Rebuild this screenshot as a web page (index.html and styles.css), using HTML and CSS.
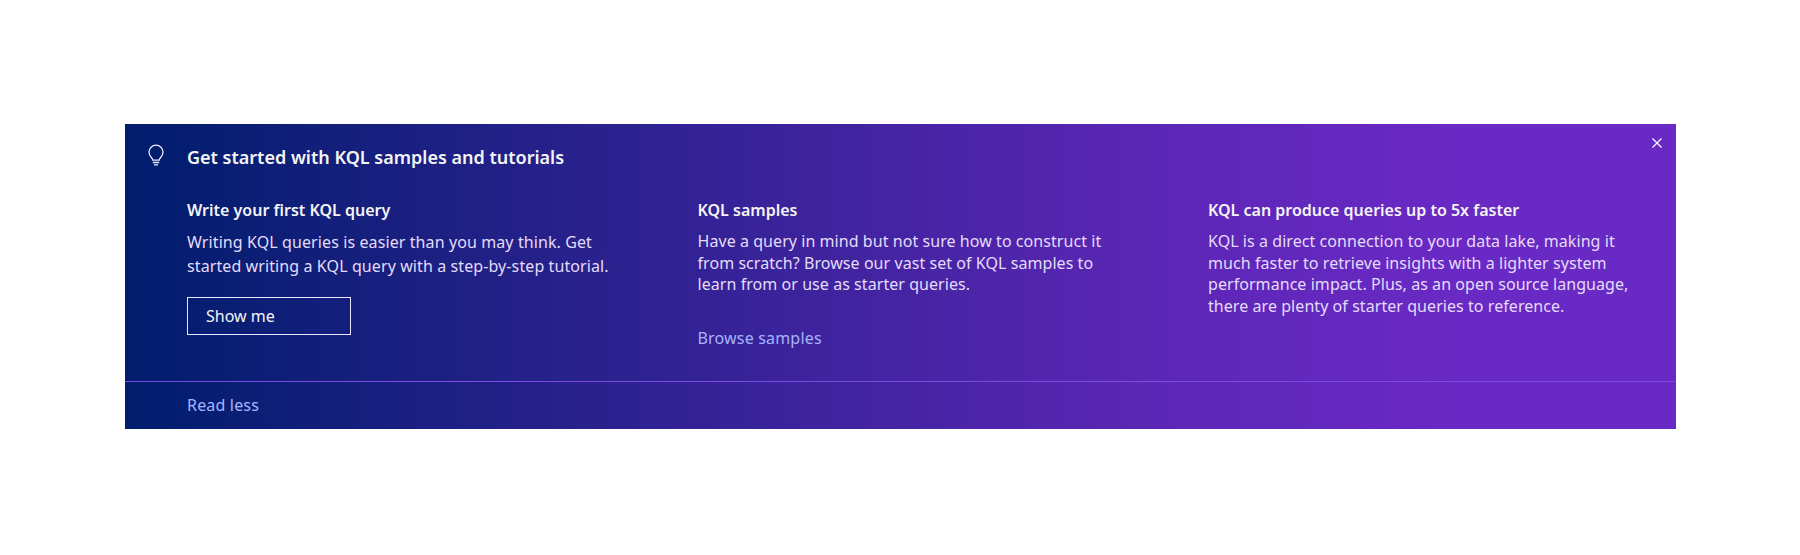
FILE: index.html
```html
<!DOCTYPE html>
<html lang="en">
<head>
<meta charset="utf-8">
<title>KQL samples and tutorials</title>
<link rel="stylesheet" href="styles.css">
</head>
<body>
<section class="banner">
  <button class="close" aria-label="Close">
    <svg width="16" height="16" viewBox="0 0 16 16"><path d="M3.500 3.500l9 9M12.500 3.500l-9 9" fill="none" stroke="currentColor" stroke-width="1.200"/></svg>
  </button>
  <div class="main">
    <header class="head">
      <svg class="bulb" width="20" height="24" viewBox="0 0 20 24"><path d="M6.800 16.200c0-2.200-3.800-3.800-3.800-8a7 7 0 0 1 14 0c0 4.200-3.800 5.800-3.800 8z" fill="none" stroke="currentColor" stroke-width="1.300"/><path d="M6.800 18.500h6.400M8 20.800h4" fill="none" stroke="currentColor" stroke-width="1.300"/></svg>
      <h2 class="title">Get started with KQL samples and tutorials</h2>
    </header>
    <div class="cols">
      <article class="col">
        <h3 class="col-title">Write your first KQL query</h3>
        <p class="text text-wide">Writing KQL queries is easier than you may think. Get<br>started writing a KQL query with a step-by-step tutorial.</p>
        <a class="btn" href="#">Show me</a>
      </article>
      <article class="col">
        <h3 class="col-title">KQL samples</h3>
        <p class="text">Have a query in mind but not sure how to construct it<br>from scratch? Browse our vast set of KQL samples to<br>learn from or use as starter queries.</p>
        <a class="link link-gap" href="#">Browse samples</a>
      </article>
      <article class="col">
        <h3 class="col-title">KQL can produce queries up to 5x faster</h3>
        <p class="text">KQL is a direct connection to your data lake, making it<br>much faster to retrieve insights with a lighter system<br>performance impact. Plus, as an open source language,<br>there are plenty of starter queries to reference.</p>
      </article>
    </div>
  </div>
  <footer class="foot"><a class="link" href="#">Read less</a></footer>
</section>
</body>
</html>
```
FILE: styles.css
```css
* { box-sizing: border-box; }
html, body { margin: 0; padding: 0; background: #fff; }
body { padding: 124px 124px 0 125px; font-family: "Noto Sans", "Open Sans", sans-serif; }
.banner {
  position: relative;
  width: 1551px;
  height: 305px;
  color: #fff;
  background: linear-gradient(90deg, #001d6c 0%, #5a26b4 65%, #6929c4 85%);
  display: flex;
  flex-direction: column;
}
.main { flex: 1; padding: 17px 0 0 0; }
.head { display: flex; align-items: center; height: 32px; }
.bulb { flex: none; width: 20px; margin-left: 21px; margin-right: 21px; margin-top: -2px; color: #e8e8ff; }
.title { margin: 0; font-size: 18px; font-weight: 600; line-height: 32px; color: #f4f4f4; }
.cols { display: flex; padding-left: 62px; margin-top: 26px; }
.col { flex: none; width: 510.500px; }
.col-title { margin: 0; font-size: 16px; font-weight: 600; line-height: 22px; color: #f4f4f4; }
.text { margin: 10px 0 0; font-size: 16px; letter-spacing: 0.060px; line-height: 21.700px; color: #e4dcfa; }
.text-wide { margin-top: 9px; letter-spacing: 0.100px; line-height: 24px; }
.btn {
  display: block;
  width: 164px;
  height: 38px;
  margin-top: 19px;
  padding-left: 18px;
  border: 1px solid #e8e8ff;
  font-size: 16px;
  line-height: 36px;
  color: #f4f4f4;
  text-decoration: none;
}
.link { font-size: 16px; letter-spacing: 0.180px; line-height: 22px; color: #a6b4ff; text-decoration: none; }
.link-gap { display: block; margin-top: 31px; }
.foot { height: 48px; padding-left: 62px; padding-bottom: 1px; border-top: 1px solid #7a4be0; display: flex; align-items: center; }
.close {
  position: absolute;
  top: 11px;
  right: 11px;
  width: 16px;
  height: 16px;
  padding: 0;
  border: 0;
  background: none;
  color: #fff;
  display: flex;
}
```
